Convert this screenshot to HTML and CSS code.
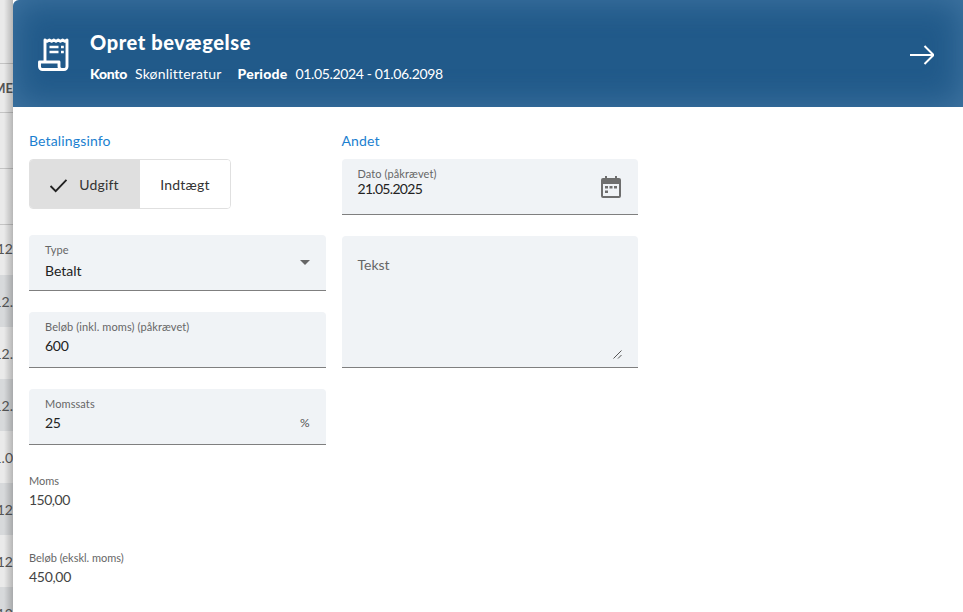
FILE: index.html
```html
<!DOCTYPE html>
<html lang="da">
<head>
<meta charset="utf-8">
<title>Opret bevægelse</title>
<link rel="stylesheet" href="styles.css">
</head>
<body>
<div class="page">
  <aside class="backdrop">
    <div class="bd-row bd-top"></div>
    <div class="bd-row bd-head"><span>ME</span></div>
    <div class="bd-row bd-r56"></div>
    <div class="bd-row bd-r56"></div>
    <div class="bd-row bd-data bd-first"><span>12</span></div>
    <div class="bd-row bd-data bd-alt"><span>12.</span></div>
    <div class="bd-row bd-data"><span>12.</span></div>
    <div class="bd-row bd-data bd-alt"><span>12.</span></div>
    <div class="bd-row bd-data"><span>1.0</span></div>
    <div class="bd-row bd-data bd-alt"><span>12</span></div>
    <div class="bd-row bd-data"><span>12</span></div>
    <div class="bd-row bd-data bd-alt"><span>12</span></div>
  </aside>
  <main class="panel">
    <header class="head">
      <svg class="receipt" viewBox="0 0 31 35" width="31" height="35" aria-hidden="true">
        <path d="M7 25V3l2.200 1.400L11.400 3l2.200 1.400L15.800 3 18 4.400 20.200 3l2.200 1.400L24.600 3l2.200 1.400L29 3v26.500a3 3 0 0 1-3 3H4.500a3 3 0 0 1-3-3V25H21v4.500a3 3 0 0 0 3 3" fill="none" stroke="#fff" stroke-width="2.900" stroke-linejoin="round"/>
        <path d="M11.500 10h9M11.500 15h9" stroke="#fff" stroke-width="2.500" fill="none"/>
        <path d="M23 8.800h2.800v2.500H23zM23 13.800h2.800v2.500H23z" fill="#fff"/>
      </svg>
      <div class="head-text">
        <h1>Opret bevægelse</h1>
        <p class="meta"><b class="k1">Konto</b><span class="v1">Skønlitteratur</span><b>Periode</b><span class="num">01.05.2024 - 01.06.2098</span></p>
      </div>
      <svg class="arrow" viewBox="0 0 24 20" width="24" height="20" aria-hidden="true">
        <path d="M0 10h22.500M14.500 1l9 9-9 9" fill="none" stroke="#fff" stroke-width="2"/>
      </svg>
    </header>
    <div class="form">
      <section class="col">
        <h2>Betalingsinfo</h2>
        <div class="toggle">
          <div class="seg seg-on">
            <svg viewBox="0 0 20 16" width="19" height="15" aria-hidden="true"><path d="M1.500 8.500l5.500 5.500L18.500 2" fill="none" stroke="#222" stroke-width="2"/></svg>
            <span>Udgift</span>
          </div>
          <div class="seg seg-off"><span>Indtægt</span></div>
        </div>
        <div class="field f-type">
          <div class="lab">Type</div>
          <div class="val">Betalt</div>
          <i class="caret"></i>
        </div>
        <div class="field">
          <div class="lab">Beløb (inkl. moms) (påkrævet)</div>
          <div class="val num">600</div>
        </div>
        <div class="field">
          <div class="lab">Momssats</div>
          <div class="val num">25</div>
          <span class="suffix">%</span>
        </div>
        <div class="static s-first">
          <div class="lab">Moms</div>
          <div class="val num">150,00</div>
        </div>
        <div class="static s-second">
          <div class="lab">Beløb (ekskl. moms)</div>
          <div class="val num">450,00</div>
        </div>
      </section>
      <section class="col">
        <h2>Andet</h2>
        <div class="field f-date">
          <div class="lab">Dato (påkrævet)</div>
          <div class="val num">21.05.2025</div>
          <svg class="cal" viewBox="0 0 20 22" width="20" height="22" aria-hidden="true">
            <path fill-rule="evenodd" fill="#6e6e6e" d="M4 0h2v2h8V0h2v2h2a2 2 0 0 1 2 2v16a2 2 0 0 1-2 2H2a2 2 0 0 1-2-2V4a2 2 0 0 1 2-2h2zM2 8v12h16V8z"/>
            <path fill="#6e6e6e" d="M4 10h3v2.500H4zM8.500 10h3v2.500h-3zM13 10h3v2.500h-3zM4 14.500h3V17H4z"/>
          </svg>
        </div>
        <div class="field f-text">
          <div class="placeholder">Tekst</div>
          <svg class="grip" viewBox="0 0 9 9" width="9" height="9" aria-hidden="true"><path d="M0.500 8.500l8-8M5 8.500l3.500-3.500" stroke="#555" stroke-width="1" fill="none"/></svg>
        </div>
      </section>
    </div>
  </main>
</div>
</body>
</html>
```

FILE: styles.css
```css
* { box-sizing: border-box; }
html, body { margin: 0; height: 100%; overflow: hidden; background: #fff; }
body { font-family: "Lato", "Liberation Sans", sans-serif; color: #222; }
.page { display: flex; height: 612px; width: 963px; }

.backdrop {
  position: relative;
  width: 13px;
  flex: none;
  overflow: hidden;
  display: flex;
  flex-direction: column;
  background: #eaeaea;
  color: #555;
  font-size: 14px;
}
.backdrop::after {
  content: "";
  position: absolute;
  inset: 0;
  background: linear-gradient(to right, rgba(0,0,0,0) 4px, rgba(0,0,0,.22) 13px);
}
.bd-row { flex: none; display: flex; align-items: center; justify-content: flex-end; white-space: nowrap; border-bottom: 1px solid #c4c4c4; }
.bd-top { height: 64px; }
.bd-head { height: 49px; font-weight: 700; font-size: 13px; }
.bd-r56 { height: 56px; }
.bd-data { height: 52px; border-bottom: 0; }
.bd-first { height: 50px; padding-bottom: 3px; }
.bd-alt { background: #d7d9db; }
.bd-row span { display: block; }

.panel { flex: 1; min-width: 0; background: #fff; }
.head {
  position: relative;
  height: 107px;
  display: flex;
  align-items: center;
  padding: 0 29px 0 25px;
  background: #215a8a;
  box-shadow: inset 0 0 34px rgba(120,165,205,.38);
  border-top-left-radius: 6px;
  color: #fff;
}
.receipt { flex: none; margin-right: 21px; margin-top: 1px; }
.head-text { flex: 1; margin-top: 6px; }
.head h1 { margin: 0 0 11px; font-size: 20px; line-height: 24px; font-weight: 900; letter-spacing: .6px; }
.meta { margin: 0; font-size: 14px; line-height: 18px; display: flex; }
.meta b { font-weight: 900; margin-right: 8px; letter-spacing: .2px; }
.meta .k1 { letter-spacing: -.3px; margin-right: 8px; }
.meta .v1 { margin-right: 16px; letter-spacing: .2px; }
.meta .num { letter-spacing: -.35px; }
.arrow { flex: none; margin-top: 2px; }

.form { display: flex; gap: 16px; padding: 25px 0 0 16px; }
.col { width: 296.500px; flex: none; }
.col h2 {
  margin: 0 0 10px;
  font-size: 14px;
  line-height: 17px;
  font-weight: 400;
  letter-spacing: .15px;
  color: #1b7fd0;
}

.toggle { display: flex; width: 202px; height: 50px; border: 1px solid #e0e0e0; border-radius: 4px; overflow: hidden; margin-bottom: 26px; }
.seg { display: flex; align-items: center; justify-content: center; font-size: 14px; color: #333; letter-spacing: .2px; }
.seg-on { width: 110px; background: #dfdfdf; gap: 11px; padding-right: 2px; }
.seg-on svg { margin-top: 2px; }
.seg-off { flex: 1; background: #fff; }

.field {
  position: relative;
  height: 56px;
  margin-bottom: 21px;
  padding: 8px 16px 0;
  background: #f0f3f6;
  border-radius: 4px 4px 0 0;
  border-bottom: 1px solid #7f7f7f;
}
.lab { font-size: 11px; line-height: 14px; color: #666; letter-spacing: .1px; }
.val { font-size: 14px; line-height: 18px; margin-top: 3px; color: #222; }
.num { letter-spacing: -.3px; }
.f-type .val { margin-top: 5px; }
.f-date .val { margin-top: -1px; letter-spacing: -.7px; }
.caret {
  position: absolute; right: 16px; top: 25px;
  width: 0; height: 0;
  border-left: 5px solid transparent; border-right: 5px solid transparent; border-top: 5px solid #666;
}
.suffix { position: absolute; right: 16px; top: 25px; font-size: 12px; line-height: 18px; color: #555; }
.cal { position: absolute; right: 17px; top: 17px; }
.f-text { height: 132px; margin-bottom: 0; padding-top: 20px; }
.placeholder { font-size: 14px; line-height: 18px; color: #666; }
.grip { position: absolute; right: 16px; bottom: 8px; }

.s-first { margin-top: 29px; }
.s-second { margin-top: 42px; }
.static .lab { color: #666; letter-spacing: 0; }
.static .val { margin-top: 3px; color: #444; }
.s-first .val { letter-spacing: -.5px; }
```
